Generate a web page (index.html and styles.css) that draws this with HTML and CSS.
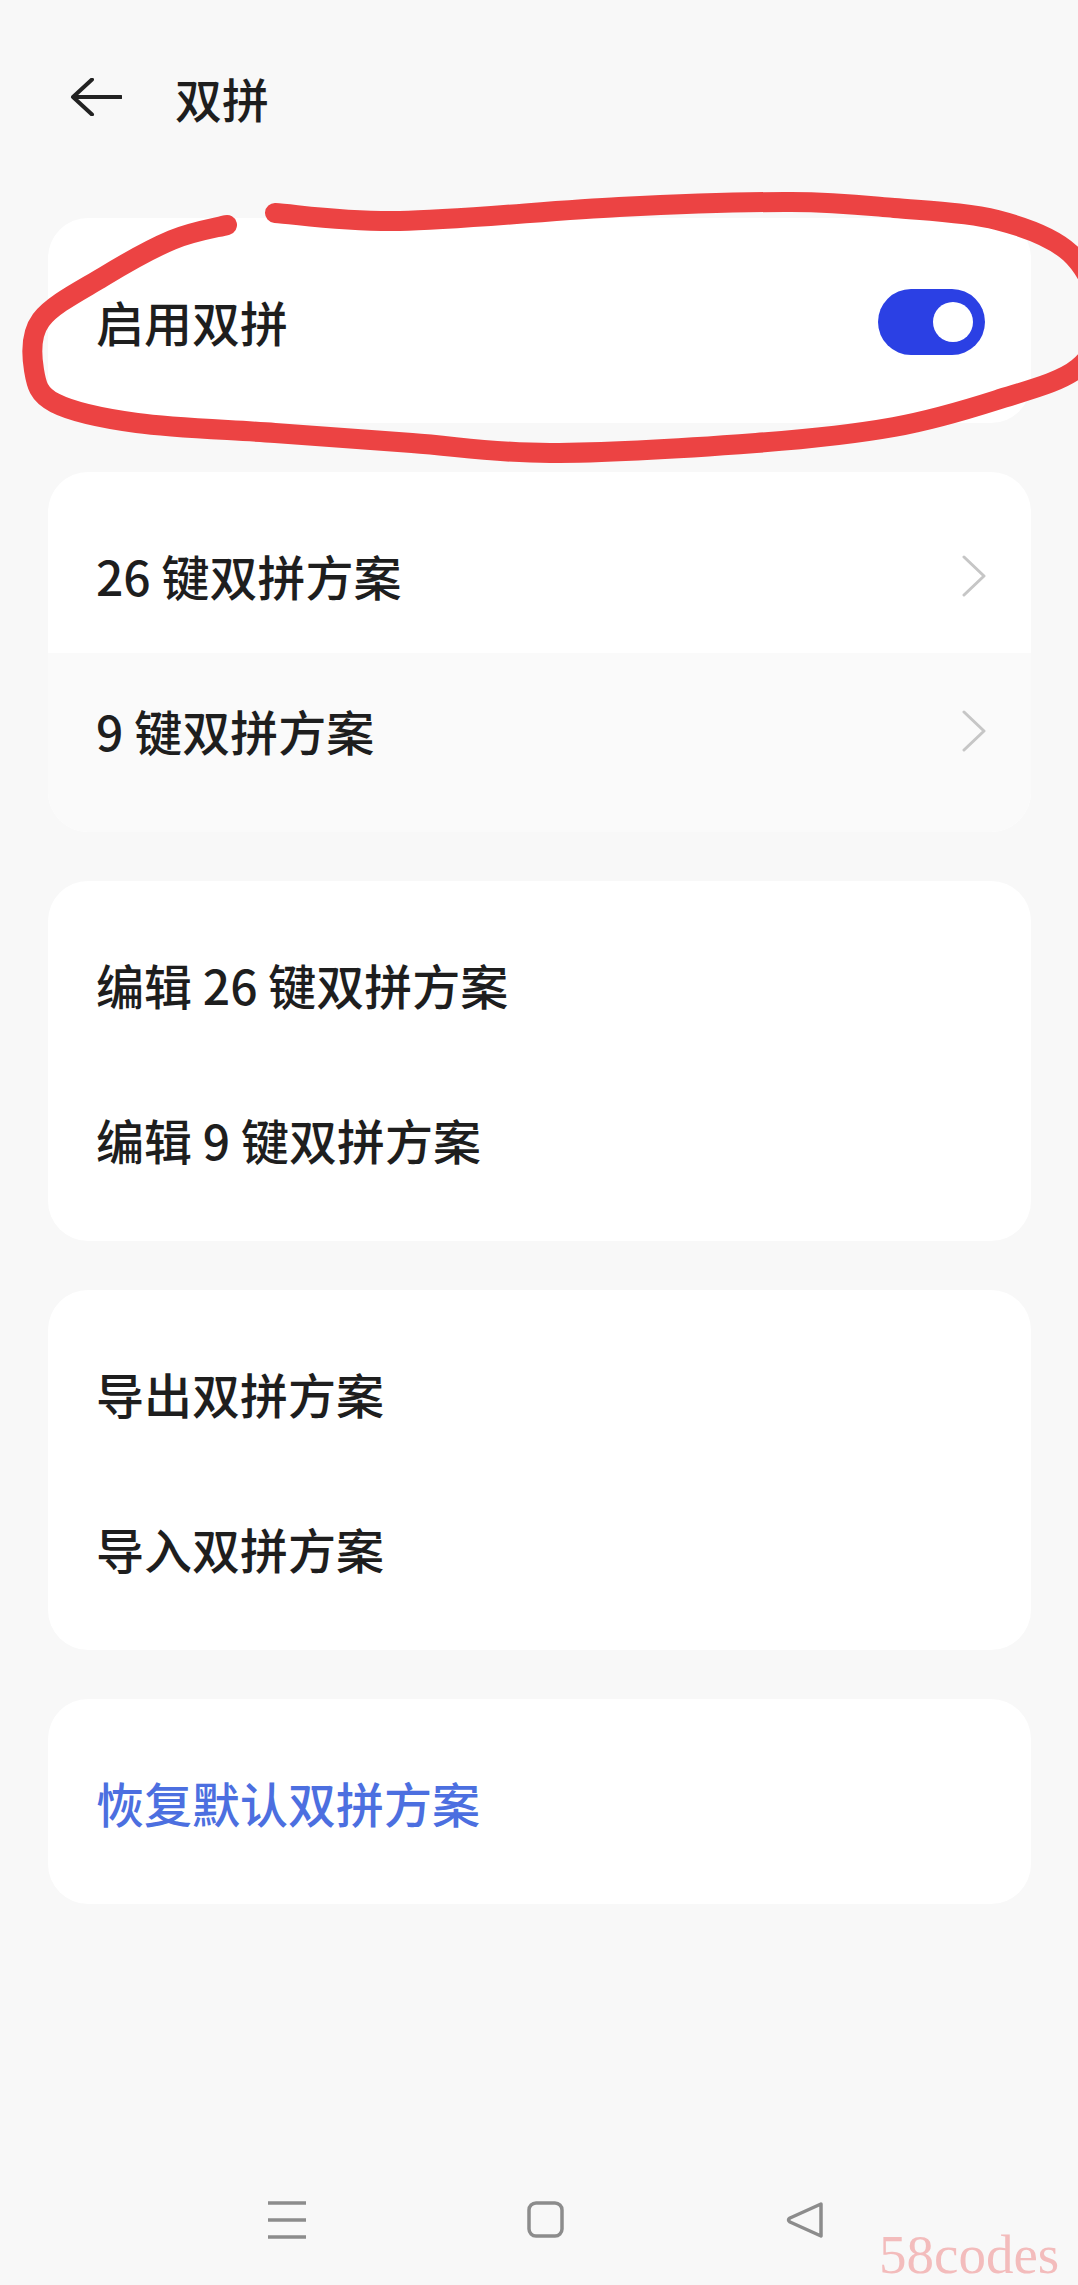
FILE: index.html
```html
<!DOCTYPE html>
<html lang="zh-CN">
<head>
  <meta charset="UTF-8" />
  <meta name="viewport" content="width=device-width, initial-scale=1.0" />
  <title>双拼</title>
  <link rel="stylesheet" href="styles.css">
</head>
<body>
  <div class="page">
    <header class="topbar">
      <svg class="back" width="52" height="38" viewBox="0 0 52 38">
        <path d="M22 1.5 L3 19 L22 36.5 M3 19 H51" fill="none" stroke="#222" stroke-width="4" stroke-linecap="round" stroke-linejoin="round"/>
      </svg>
      <h1>双拼</h1>
    </header>

    <main class="settings">
      <section class="card">
        <div class="row">
          <span class="label">启用双拼</span>
          <span class="switch on"><span class="knob"></span></span>
        </div>
      </section>

      <section class="card">
        <div class="row">
          <span class="label">26 键双拼方案</span>
          <svg class="chevron" width="24" height="42" viewBox="0 0 24 42">
            <path d="M2 2 L22 21 L2 40" fill="none" stroke="#c6c6c6" stroke-width="3" stroke-linecap="round" stroke-linejoin="round"/>
          </svg>
        </div>
        <div class="row pressed">
          <span class="label">9 键双拼方案</span>
          <svg class="chevron" width="24" height="42" viewBox="0 0 24 42">
            <path d="M2 2 L22 21 L2 40" fill="none" stroke="#c6c6c6" stroke-width="3" stroke-linecap="round" stroke-linejoin="round"/>
          </svg>
        </div>
      </section>

      <section class="card">
        <div class="row"><span class="label">编辑 26 键双拼方案</span></div>
        <div class="row"><span class="label">编辑 9 键双拼方案</span></div>
      </section>

      <section class="card">
        <div class="row"><span class="label">导出双拼方案</span></div>
        <div class="row"><span class="label">导入双拼方案</span></div>
      </section>

      <section class="card">
        <div class="row"><span class="label link">恢复默认双拼方案</span></div>
      </section>
    </main>

    <nav class="navbar">
      <svg class="nav-icon" width="40" height="38" viewBox="0 0 40 38">
        <path d="M1 2 H39 M1 19 H39 M1 36 H39" stroke="#8c8c8c" stroke-width="3.5"/>
      </svg>
      <svg class="nav-icon" width="40" height="38" viewBox="0 0 40 38">
        <rect x="3" y="2" width="33" height="33" rx="7" fill="none" stroke="#8c8c8c" stroke-width="3.5"/>
      </svg>
      <svg class="nav-icon" width="40" height="38" viewBox="0 0 40 38">
        <path d="M36 3 L5 17 Q2 19 5 21 L36 35 Z" fill="none" stroke="#8c8c8c" stroke-width="3.5" stroke-linejoin="round"/>
      </svg>
      <span class="watermark">58codes</span>
    </nav>

    <!-- hand-drawn marker around the first card -->
    <svg class="scribble" width="1078" height="480" viewBox="0 0 1078 480">
      <path d="M227 225
               C217.8 227.5 192.7 231.3 172 240
               C151.3 248.7 124.8 263.7 103 277
               C81.2 290.3 52.5 304.5 41 320
               C29.5 335.5 31.7 356.2 34 370
               C36.3 383.8 37.8 394.2 55 403
               C72.2 411.8 100.3 418 137 423
               C173.7 428 229.2 429.7 275 433
               C320.8 436.3 366.2 439.7 412 443
               C457.8 446.3 492.7 453 550 453
               C607.3 453 698.7 447.3 756 443
               C813.3 438.7 853.8 434.2 894 427
               C934.2 419.8 966.3 409.8 997 400
               C1027.7 390.2 1060.8 382.2 1078 368
               C1095.2 353.8 1101.3 334.2 1100 315
               C1098.7 295.8 1087.2 268.8 1070 253
               C1052.8 237.2 1026.3 227.5 997 220
               C967.7 212.5 928.3 211 894 208
               C859.7 205 836.8 202.2 791 202
               C745.2 201.8 684.2 203.8 619 207
               C553.8 210.2 457.3 220 400 221
               C342.7 222 295.8 214.3 275 213"
            fill="none" stroke="#ec4343" stroke-width="20" stroke-linecap="round" stroke-linejoin="round"/>
    </svg>
  </div>
</body>
</html>
```

FILE: styles.css
```css
:root {
  --page-bg: #f8f8f8;
  --card-bg: #ffffff;
  --text: #1e1e1e;
  --link: #4c6fe0;
  --switch-on: #2b40e4;
}

* {
  margin: 0;
  padding: 0;
  box-sizing: border-box;
}

body {
  background-color: var(--page-bg);
  color: var(--text);
  font-family: "Noto Sans CJK SC", "Noto Sans", sans-serif;
}

.page {
  position: relative;
  min-height: 100vh;
  display: flex;
  flex-direction: column;
}

.topbar {
  height: 194px;
  display: flex;
  align-items: center;
  padding-left: 70px;
}

.back {
  display: block;
  margin-right: 53px;
}

.topbar h1 {
  font-size: 47px;
  font-weight: 450;
  line-height: 1;
}

.settings {
  padding: 24px 47px 0 48px;
  display: flex;
  flex-direction: column;
  gap: 49px;
}

.card {
  background: var(--card-bg);
  border-radius: 40px;
  overflow: hidden;
}

.row {
  height: 155px;
  box-sizing: content-box;
  display: flex;
  align-items: center;
  justify-content: space-between;
  padding: 0 46px 0 48px;
}

.row:first-child {
  padding-top: 26px;
}

.row:last-child {
  padding-bottom: 24px;
}

.row.pressed {
  background: #fafafa;
}

.label {
  font-size: 48px;
  font-weight: 450;
  line-height: 1.2;
}

.label.link {
  color: var(--link);
}

.chevron {
  display: block;
  margin-right: -1px;
}

.switch {
  width: 107px;
  height: 66px;
  border-radius: 33px;
  background: #d8d8d8;
  display: flex;
  align-items: center;
  padding: 0 12px;
}

.switch.on {
  background: var(--switch-on);
  justify-content: flex-end;
}

.knob {
  width: 40px;
  height: 40px;
  border-radius: 50%;
  background: #fff;
}

.navbar {
  position: relative;
  margin-top: auto;
  height: 110px;
  display: flex;
  justify-content: center;
  align-items: flex-start;
  gap: 219px;
  padding: 26px 0 0 14px;
}

.nav-icon {
  display: block;
}

.watermark {
  position: absolute;
  left: 879px;
  bottom: 3px;
  font-family: "Liberation Serif", serif;
  font-size: 55px;
  line-height: 1;
  color: #f3bcbc;
}

.scribble {
  position: absolute;
  top: 0;
  left: 0;
  pointer-events: none;
}
```
